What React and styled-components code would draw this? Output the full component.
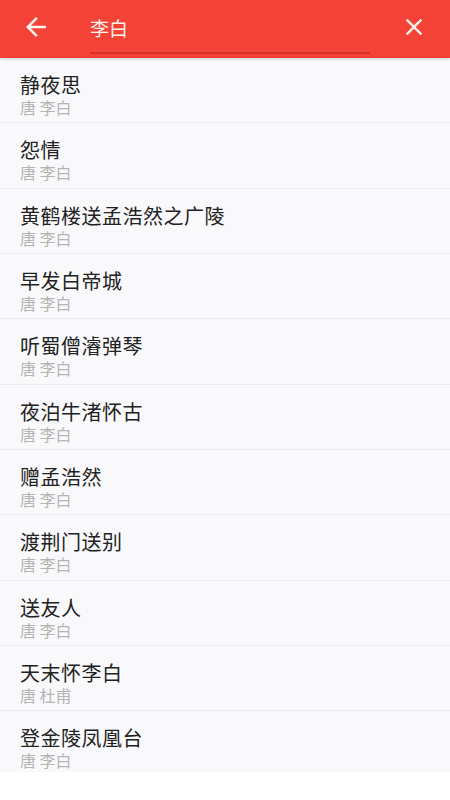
import styled, { createGlobalStyle } from "styled-components";
import { MdArrowBack, MdClose } from "react-icons/md";

const poems = [
  { title: "静夜思", author: "唐 李白" },
  { title: "怨情", author: "唐 李白" },
  { title: "黄鹤楼送孟浩然之广陵", author: "唐 李白" },
  { title: "早发白帝城", author: "唐 李白" },
  { title: "听蜀僧濬弹琴", author: "唐 李白" },
  { title: "夜泊牛渚怀古", author: "唐 李白" },
  { title: "赠孟浩然", author: "唐 李白" },
  { title: "渡荆门送别", author: "唐 李白" },
  { title: "送友人", author: "唐 李白" },
  { title: "天末怀李白", author: "唐 杜甫" },
  { title: "登金陵凤凰台", author: "唐 李白" },
];

export default function App() {
  return (
    <Page>
      <Global />
      <Header>
        <IconBtn type="button">
          <MdArrowBack size={30} />
        </IconBtn>
        <SearchField>
          <SearchInput defaultValue="李白" />
        </SearchField>
        <IconBtn type="button">
          <MdClose size={28} />
        </IconBtn>
      </Header>

      <List>
        {poems.map((p, i) => (
          <Row key={i}>
            <Title>{p.title}</Title>
            <Author>{p.author}</Author>
          </Row>
        ))}
      </List>
    </Page>
  );
}

const Global = createGlobalStyle`
  html, body {
    margin: 0;
    background: #ffffff;
  }
  * {
    box-sizing: border-box;
  }
`;

const Page = styled.div`
  width: 450px;
  height: 800px;
  overflow: hidden;
  font-family: "Noto Sans CJK SC", "Noto Sans", sans-serif;
  background: #ffffff;
`;

const Header = styled.header`
  position: relative;
  z-index: 1;
  height: 58px;
  display: flex;
  align-items: center;
  padding: 0 8px 4px 8px;
  background: #f44336;
  box-shadow: 0 1px 3px rgba(0, 0, 0, 0.18);
`;

const IconBtn = styled.button`
  width: 56px;
  height: 54px;
  display: flex;
  align-items: center;
  justify-content: center;
  padding: 0;
  border: none;
  background: transparent;
  color: #fff3ee;
  cursor: pointer;
`;

const SearchField = styled.div`
  flex: 1;
  display: flex;
  align-items: center;
  height: 100%;
  padding: 0 16px 0 26px;
`;

const SearchInput = styled.input`
  width: 100%;
  height: 44px;
  margin-top: 10px;
  padding: 0 0 8px 0;
  border: none;
  border-bottom: 2px solid #d6302b;
  background: transparent;
  outline: none;
  color: #fff1ec;
  font-family: "Noto Sans CJK SC", sans-serif;
  font-size: 19px;
`;

const List = styled.div`
  height: 714px;
  overflow: hidden;
  background: #f9f9fb;
`;

const Row = styled.div`
  display: flex;
  flex-direction: column;
  padding: 15px 20px 0 20px;
  height: 65.33px;
  border-bottom: 1px solid #ebebee;
`;

const Title = styled.div`
  font-size: 20px;
  line-height: 24px;
  letter-spacing: 0.5px;
  color: #222222;
`;

const Author = styled.div`
  font-size: 16px;
  line-height: 20px;
  color: #b5b5b5;
`;
